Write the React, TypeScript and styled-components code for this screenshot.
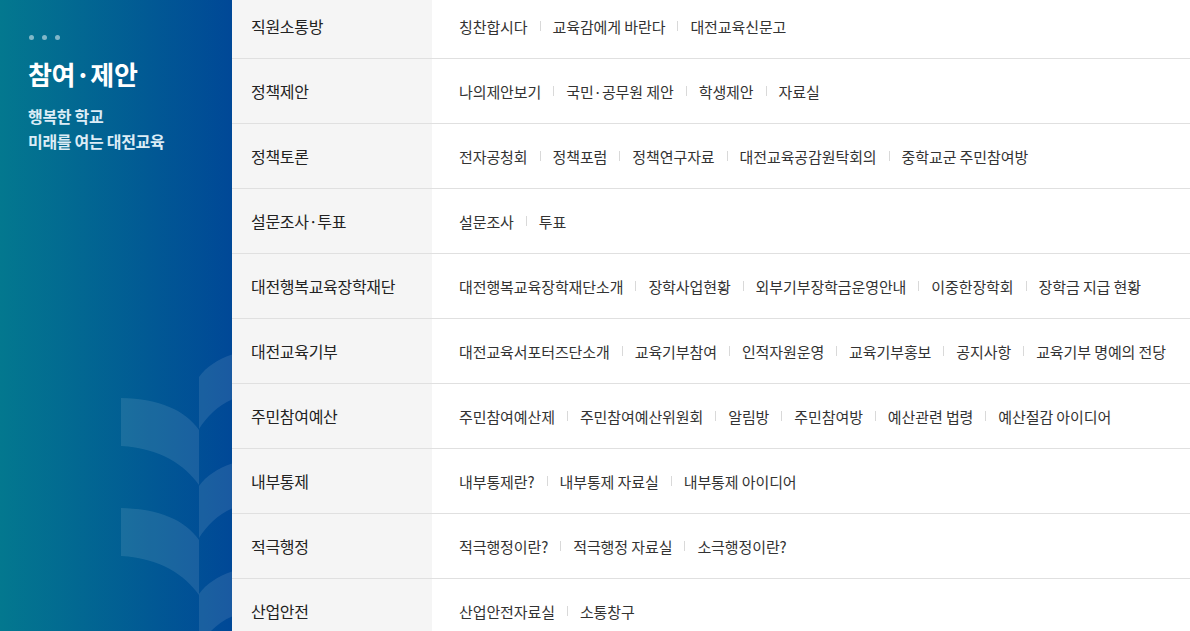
import React from "react";
import styled, { createGlobalStyle } from "styled-components";

const Global = createGlobalStyle`
  html, body { margin: 0; padding: 0; background: #fff; overflow: hidden; }
  body { font-family: "Noto Sans CJK KR", "Noto Sans", sans-serif; }
  * { box-sizing: border-box; }
`;

const Page = styled.div`
  display: flex;
  width: 1190px;
  height: 631px;
  overflow: hidden;
`;

const Aside = styled.aside`
  position: relative;
  flex: 0 0 232px;
  height: 631px;
  background: linear-gradient(90deg, #03788f 0%, #004897 100%);
  padding: 35px 0 0 28px;
  color: #fff;
  overflow: hidden;
`;

const Dots = styled.div`
  display: flex;
  gap: 8px;
  margin-left: 1px;
`;

const Dot = styled.span`
  width: 5px;
  height: 5px;
  border-radius: 50%;
  background: rgba(255, 255, 255, 0.5);
`;

const Title = styled.h2`
  margin: 16px 0 0;
  font-size: 26px;
  font-weight: 700;
  line-height: 36px;
  letter-spacing: -0.3px;
`;

const Sub = styled.p`
  margin: 12px 0 0;
  font-size: 16px;
  font-weight: 700;
  line-height: 25px;
  color: #dcecf6;
  letter-spacing: -0.3px;
`;

const Deco = styled.svg`
  position: absolute;
  left: 0;
  top: 0;
  pointer-events: none;
`;

const List = styled.ul`
  flex: 1;
  list-style: none;
  margin: -6px 0 0;
  padding: 0;
`;

const Row = styled.li`
  display: flex;
  height: 65px;
  border-bottom: 1px solid #e0e0e0;
`;

const Cat = styled.div`
  flex: 0 0 200px;
  display: flex;
  align-items: center;
  padding-left: 19px;
  background: #f5f5f5;
  font-size: 16px;
  color: #222;
  letter-spacing: -0.3px;
`;

const Links = styled.div`
  flex: 1;
  display: flex;
  align-items: center;
  padding-left: 27px;
`;

const LinkItem = styled.a`
  display: flex;
  align-items: center;
  font-size: 15px;
  color: #333;
  text-decoration: none;
  letter-spacing: -0.1px;
  white-space: nowrap;

  & + &::before {
    content: "";
    display: block;
    width: 1px;
    height: 10px;
    background: #d9d9d9;
    margin: 0 12px;
  }
`;

const data: [string, string[]][] = [
  ["직원소통방", ["칭찬합시다", "교육감에게 바란다", "대전교육신문고"]],
  ["정책제안", ["나의제안보기", "국민·공무원 제안", "학생제안", "자료실"]],
  ["정책토론", ["전자공청회", "정책포럼", "정책연구자료", "대전교육공감원탁회의", "중학교군 주민참여방"]],
  ["설문조사·투표", ["설문조사", "투표"]],
  ["대전행복교육장학재단", ["대전행복교육장학재단소개", "장학사업현황", "외부기부장학금운영안내", "이중한장학회", "장학금 지급 현황"]],
  ["대전교육기부", ["대전교육서포터즈단소개", "교육기부참여", "인적자원운영", "교육기부홍보", "공지사항", "교육기부 명예의 전당"]],
  ["주민참여예산", ["주민참여예산제", "주민참여예산위원회", "알림방", "주민참여방", "예산관련 법령", "예산절감 아이디어"]],
  ["내부통제", ["내부통제란?", "내부통제 자료실", "내부통제 아이디어"]],
  ["적극행정", ["적극행정이란?", "적극행정 자료실", "소극행정이란?"]],
  ["산업안전", ["산업안전자료실", "소통창구"]],
];

const leftLeaf = (y: number) =>
  `M121,${y} C160,${y + 1} 185,${y + 12} 199,${y + 32} L199,${y + 87} C185,${y + 67} 160,${y + 50} 121,${y + 48} Z`;
const rightLeaf = (y: number) =>
  `M199,${y} C208,${y - 12} 220,${y - 19} 240,${y - 25} L240,${y + 20} C222,${y + 24} 208,${y + 38} 199,${y + 52} Z`;

export default function App() {
  return (
    <>
      <Global />
      <Page>
        <Aside>
          <Deco width="232" height="631" viewBox="0 0 232 631">
            <g fill="rgba(255,255,255,0.1)">
              <path d={rightLeaf(377)} />
              <path d={leftLeaf(398)} />
              <path d={rightLeaf(486)} />
              <path d={leftLeaf(508)} />
              <path d={rightLeaf(594)} />
            </g>
          </Deco>
          <Dots>
            <Dot />
            <Dot />
            <Dot />
          </Dots>
          <Title>참여·제안</Title>
          <Sub>
            행복한 학교
            <br />
            미래를 여는 대전교육
          </Sub>
        </Aside>
        <List>
          {data.map(([cat, links]) => (
            <Row key={cat}>
              <Cat>{cat}</Cat>
              <Links>
                {links.map((l) => (
                  <LinkItem key={l} href="#">
                    {l}
                  </LinkItem>
                ))}
              </Links>
            </Row>
          ))}
        </List>
      </Page>
    </>
  );
}
